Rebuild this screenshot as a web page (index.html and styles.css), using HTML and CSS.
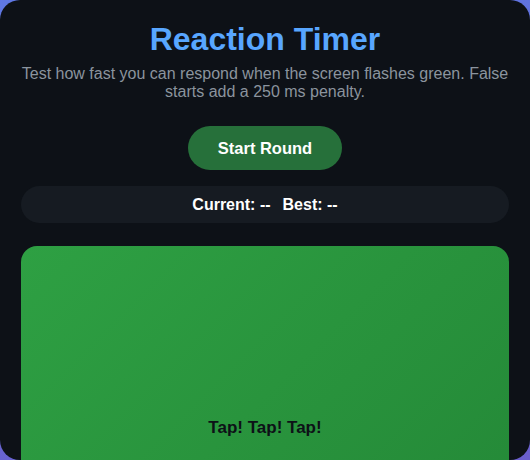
FILE: index.html
```html
<!DOCTYPE html>
<html lang="en">
<head>
<meta charset="utf-8">
<title>Reaction Timer</title>
<link rel="stylesheet" href="styles.css">
</head>
<body>
<main class="card">
  <h1 class="title">Reaction Timer</h1>
  <p class="subtitle">Test how fast you can respond when the screen flashes green. False starts add a 250 ms penalty.</p>
  <div class="actions">
    <button class="start-btn" type="button">Start Round</button>
  </div>
  <div class="stats">
    <span class="stat">Current: --</span>
    <span class="stat">Best: --</span>
  </div>
  <div class="pad">
    <span class="pad-text">Tap! Tap! Tap!</span>
  </div>
</main>
</body>
</html>
```

FILE: styles.css
```css
* { box-sizing: border-box; }

html, body {
  margin: 0;
  padding: 0;
}

body {
  height: 460px;
  overflow: hidden;
  background: linear-gradient(170deg, #5f78e4 0%, #6a5fcc 100%);
  font-family: "Liberation Sans", Arial, sans-serif;
}

.card {
  height: 460px;
  background: #0d1117;
  border-radius: 20px;
  padding: 21px 21px 0;
  display: flex;
  flex-direction: column;
}

.card > * {
  flex-shrink: 0;
}

.title {
  margin: 0;
  text-align: center;
  color: #58a6ff;
  font-size: 32px;
  font-weight: 700;
  line-height: 37px;
}

.subtitle {
  margin: 7px 0 0;
  text-align: center;
  color: #8b949e;
  font-size: 16px;
  line-height: 18px;
}

.actions {
  display: flex;
  justify-content: center;
  margin-top: 25px;
}

.start-btn {
  width: 154px;
  height: 44px;
  border: none;
  border-radius: 22px;
  background: #26703a;
  color: #ffffff;
  font-family: "Liberation Sans", Arial, sans-serif;
  font-size: 16.5px;
  font-weight: 700;
  padding: 0;
}

.stats {
  margin-top: 16px;
  height: 37px;
  border-radius: 19px;
  background: #161b22;
  display: flex;
  justify-content: center;
  align-items: center;
  gap: 12px;
  color: #ffffff;
  font-size: 16px;
  font-weight: 700;
}

.pad {
  margin-top: 23px;
  height: 364px;
  border-radius: 16px;
  background: linear-gradient(135deg, #2ea043 0%, #238636 100%);
  display: flex;
  justify-content: center;
  align-items: center;
}

.pad-text {
  color: #0d1117;
  font-size: 17px;
  font-weight: 700;
}
```
